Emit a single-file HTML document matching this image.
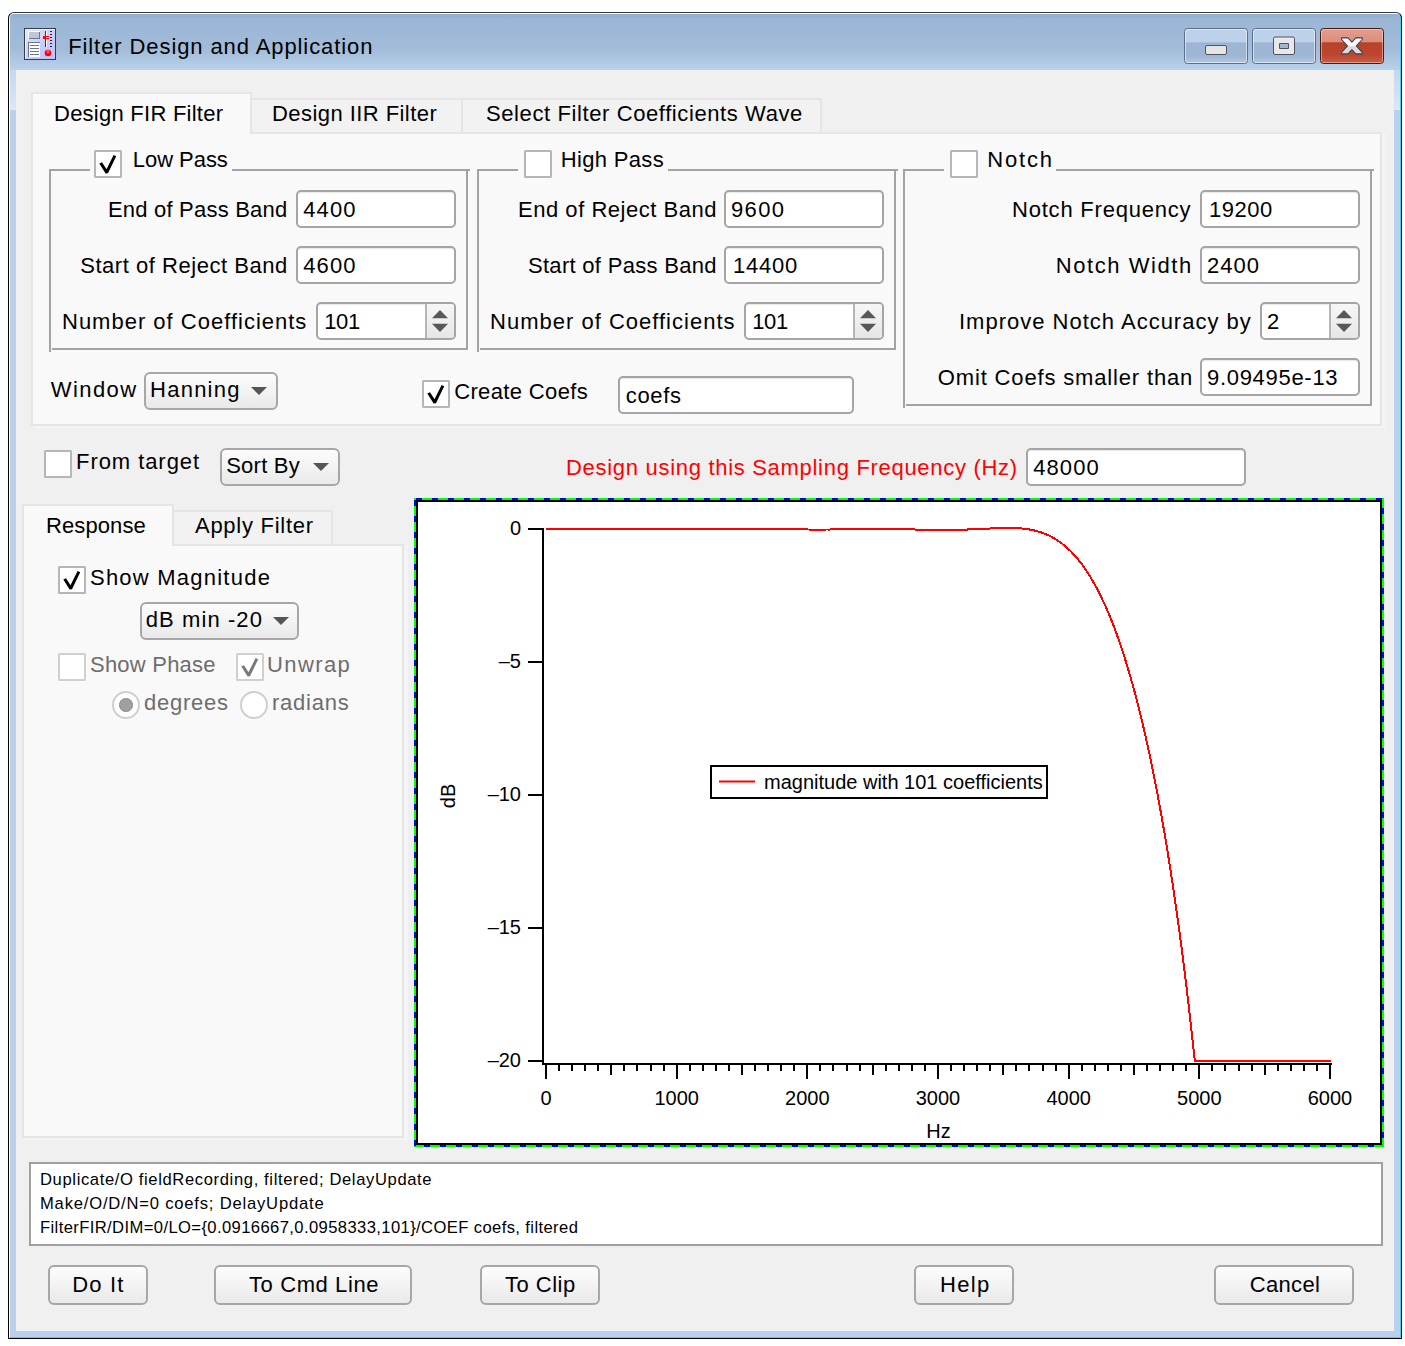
<!DOCTYPE html>
<html lang="en"><head><meta charset="utf-8"><title>Filter Design and Application</title>
<style>
html,body{margin:0;padding:0;background:#fff}
body{width:1405px;height:1346px;position:relative;overflow:hidden;font-family:"Liberation Sans",Arial,sans-serif;color:#000}
div,span,svg,i{box-sizing:border-box}
.abs,.t,.in,.btn,.cb,.rb,.ln,.spb,.pane,.tab,.frame,.client,.titlebar,.wb,.graph,.cmd{position:absolute}
.t{white-space:pre;display:block}
.frame{border:1px solid #000;border-top-color:#3a3a3a;border-radius:6px 6px 0 0;background:#b9d1ea;box-shadow:inset 1px 1px 0 #fff,inset -1px -1px 0 #3fd4f6}
.glow{position:absolute;background:linear-gradient(#c3d7ee,#dce8f5)}
.titlebar{background:linear-gradient(#92aed0 0,#9cb7d6 10%,#a1bbd9 62%,#b9d1ea 100%);border-radius:4px 4px 0 0}
.client{background:#f0f0f0}
.pane{background:#f9f9f9;border:2px solid #e5e5e5;box-shadow:4px 2px 0 #f4f4f4}
.tab{background:#f2f2f2;border:2px solid #e5e5e5;border-bottom:none}
.tab.on{background:#f9f9f9}
.ln{background:#a3a3a3}
.in{background:#fff;border:2px solid #a5a5a5;border-radius:5px;box-shadow:inset 0 2px 1px -1px #e9e9e9}
.spb{background:linear-gradient(#f7f7f7,#e6e6e6);border-left:2px solid #b5b5b5;border-radius:0 3px 3px 0}
.btn{background:linear-gradient(#fcfcfc 0,#f3f3f3 50%,#e9e9e9 100%);border:2px solid #a7a7a7;border-radius:6px}
.cb{background:#fff;border:2px solid #b6b6b6;border-radius:1.5px}
.cb.dis{border-color:#d0d0d0}
.cb svg{position:absolute;left:-2px;top:-2px}
.cb polygon{fill:#000}
.cb.dis polygon{fill:#7a7a7a}
.rb{background:#fff;border:2px solid #cfcfcf;border-radius:50%}
.rb i{position:absolute;left:5.2px;top:5.2px;width:13.600px;height:13.600px;border-radius:50%;background:#a0a0a0;border:1.500px solid #8c8c8c}
.dis{color:#6d6d6d}
.cmd{background:#fff;border:2px solid #a0a0a0}
.red{color:#f00}
</style></head><body>

<div class="window">
<div class="frame" style="left:8px;top:12px;width:1394px;height:1327px;"></div>
<div class="titlebar" style="left:10px;top:14px;width:1390px;height:56px;"></div>
<div class="glow" style="left:10px;top:70px;width:6px;height:40px;"></div>
<div class="glow" style="left:1394px;top:70px;width:6px;height:40px;"></div>
<svg class="abs" style="left:24px;top:28px" width="32" height="32" viewBox="0 0 32 32">
<defs><linearGradient id="icg" x1="0" y1="0" x2="1" y2="1"><stop offset="0" stop-color="#e6e6ff"/><stop offset=".55" stop-color="#cacbfa"/><stop offset="1" stop-color="#bdc0f7"/></linearGradient>
<radialGradient id="icb" cx=".5" cy=".3" r=".6"><stop offset="0" stop-color="#ffb0b0"/><stop offset=".45" stop-color="#ff1010"/><stop offset="1" stop-color="#f00000"/></radialGradient></defs>
<rect x=".5" y=".5" width="31" height="31" fill="url(#icg)" stroke="#333d4a"/>
<path d="M1.500 30.500V1.500H30.500" fill="none" stroke="#f4f4ff" stroke-opacity=".8"/>
<rect x="4" y="3" width="12" height="8" fill="#fff"/><rect x="5" y="4" width="11" height="7" fill="#66788f"/><rect x="5" y="4" width="10" height="6" fill="#c0c6d2"/>
<rect x="4" y="14" width="12" height="15" fill="#66788f"/><rect x="5" y="15" width="11" height="14" fill="#fff"/>
<path d="M6 17.500h9M6 20.500h9M6 23.500h9M6 26.500h9" stroke="#66788f"/>
<rect x="21" y="3" width="1" height="16" fill="#2f3946"/><rect x="22" y="3" width="1" height="16" fill="#fff"/>
<path d="M26 3.500h2M26 6.500h2M26 9.500h2M26 12.500h2M26 15.500h2M26 18.500h2" stroke="#262626"/>
<rect x="19" y="8" width="6" height="3" fill="#f00"/><rect x="22" y="9" width="3" height="1" fill="#fff"/>
<circle cx="24" cy="25" r="3.300" fill="url(#icb)"/>
</svg>
<span id="t1" class="t " style="left:68.20px;top:34px;font-size:22px;line-height:25px;letter-spacing:0.907px;">Filter Design and Application</span>
<style>
.wb{border:1px solid #5a6f8d;border-radius:3.5px;box-shadow:inset 0 0 0 1px rgba(255,255,255,.55);
background:linear-gradient(#bdd2ea 0,#bdd2ea 39%,#9eb6d4 40%,#9eb6d4 80%,#b1c8e2 100%)}
.wb.close{border-color:#4b1a14;background:linear-gradient(#e39d8e 0,#dc8d7c 39%,#b8412a 40%,#bb452e 75%,#cc5d48 100%);box-shadow:inset 0 0 0 1px rgba(255,220,210,.5)}
.wb svg{position:absolute;left:-1px;top:-1px}
</style>
<div class="wb min" style="left:1184px;top:28px;width:64px;height:36px"><svg width="64" height="36" viewBox="0 0 64 36"><rect x="21.500" y="17.500" width="21" height="9" rx="1.500" fill="#e4e4e4" stroke="#4f5560"/></svg></div>
<div class="wb max" style="left:1252px;top:28px;width:64px;height:36px"><svg width="64" height="36" viewBox="0 0 64 36"><path d="M21.500 10.500a1.500 1.500 0 0 1 1.500-1.500h18a1.500 1.500 0 0 1 1.500 1.500v14.500a1.500 1.500 0 0 1-1.500 1.500h-18a1.500 1.500 0 0 1-1.500-1.500zM27.500 15.500v5h9v-5z" fill="#e8e8e8" fill-rule="evenodd" stroke="#4f5560"/></svg></div>
<div class="wb close" style="left:1320px;top:28px;width:64px;height:36px"><svg width="64" height="36" viewBox="0 0 64 36"><defs><linearGradient id="xg" x1="0" y1="0" x2="0" y2="1"><stop offset=".52" stop-color="#fdfdfd"/><stop offset=".53" stop-color="#dcdcdc"/></linearGradient></defs><path d="M21.600 9.900h6.400l3.900 4.200 3.900-4.200h6.400v1.600l-5.900 6.400 5.900 6.400v1.600h-6.400l-3.900-4.200-3.900 4.200h-6.400v-1.600l5.900-6.400-5.900-6.400z" fill="url(#xg)" stroke="#3b4058" stroke-width="1.100" stroke-linejoin="round"/></svg></div>
<div class="client" style="left:16px;top:70px;width:1378px;height:1261px;"></div>
<div class="tabwidget">
<div class="pane" style="left:31px;top:132px;width:1351px;height:294px;"></div>
<div class="tab" style="left:250px;top:98px;width:213px;height:34px;"></div>
<div class="tab" style="left:461px;top:98px;width:361px;height:34px;"></div>
<div class="tab on" style="left:31px;top:92px;width:221px;height:42px;"></div>
<span id="t2" class="t " style="left:54.00px;top:101px;font-size:22px;line-height:25px;letter-spacing:0.250px;">Design FIR Filter</span>
<span id="t3" class="t " style="left:272.00px;top:101px;font-size:22px;line-height:25px;letter-spacing:0.438px;">Design IIR Filter</span>
<span id="t4" class="t " style="left:486.00px;top:101px;font-size:22px;line-height:25px;letter-spacing:0.600px;">Select Filter Coefficients Wave</span>
<div class="group"><div class="ln" style="left:49px;top:169px;width:2px;height:182.5px;"></div><div class="ln" style="left:466px;top:171px;width:2px;height:179px;"></div><div class="ln" style="left:52px;top:348px;width:416px;height:2px;"></div><div class="ln" style="left:49px;top:169px;width:41px;height:2px;"></div><div class="ln" style="left:232px;top:169px;width:237.5px;height:2px;"></div><div class="cb" style="left:94px;top:150px;width:28px;height:28px;"><svg class="ck" width="28" height="28" viewBox="0 0 28 28"><polygon points="5.3,13.4 8,12.2 12.5,19.3 19.6,5 22.2,6.2 14,23.2 11.6,23.5"/></svg></div><span id="t5" class="t " style="left:132.80px;top:147px;font-size:22px;line-height:25px;letter-spacing:-0.046px;">Low Pass</span><span id="t6" class="t " style="left:108.00px;top:197px;font-size:22px;line-height:25px;letter-spacing:0.200px;">End of Pass Band</span><div class="field"><div class="in" style="left:296px;top:190px;width:160px;height:38px;"></div><span id="t7" class="t " style="left:303.20px;top:197px;font-size:22px;line-height:25px;letter-spacing:1.122px;">4400</span></div><span id="t8" class="t " style="left:80.20px;top:253px;font-size:22px;line-height:25px;letter-spacing:0.536px;">Start of Reject Band</span><div class="field"><div class="in" style="left:296px;top:246px;width:160px;height:38px;"></div><span id="t9" class="t " style="left:303.20px;top:253px;font-size:22px;line-height:25px;letter-spacing:1.122px;">4600</span></div><span id="t10" class="t " style="left:62.00px;top:309px;font-size:22px;line-height:25px;letter-spacing:1.000px;">Number of Coefficients</span><div class="field"><div class="in" style="left:316px;top:302px;width:140px;height:38px;"></div><div class="spb" style="left:425px;top:304px;width:29px;height:34px;"></div><svg class="abs" style="left:425px;top:302px" width="31" height="38" viewBox="0 0 31 38"><polygon points="7,16.2 15,8 23,16.2" fill="#585858"/><polygon points="7,21.8 15,30 23,21.8" fill="#585858"/></svg><span id="t11" class="t " style="left:324.20px;top:309px;font-size:22px;line-height:25px;letter-spacing:-0.300px;">101</span></div></div>
<div class="group"><div class="ln" style="left:477px;top:169px;width:2px;height:182.5px;"></div><div class="ln" style="left:894px;top:171px;width:2px;height:179px;"></div><div class="ln" style="left:480px;top:348px;width:416px;height:2px;"></div><div class="ln" style="left:477px;top:169px;width:41px;height:2px;"></div><div class="ln" style="left:668px;top:169px;width:229.5px;height:2px;"></div><div class="cb" style="left:524px;top:150px;width:28px;height:28px;"></div><span id="t12" class="t " style="left:560.80px;top:147px;font-size:22px;line-height:25px;letter-spacing:0.325px;">High Pass</span><span id="t13" class="t " style="left:518.00px;top:197px;font-size:22px;line-height:25px;letter-spacing:0.529px;">End of Reject Band</span><div class="field"><div class="in" style="left:724px;top:190px;width:160px;height:38px;"></div><span id="t14" class="t " style="left:731.00px;top:197px;font-size:22px;line-height:25px;letter-spacing:1.334px;">9600</span></div><span id="t15" class="t " style="left:528.00px;top:253px;font-size:22px;line-height:25px;letter-spacing:0.294px;">Start of Pass Band</span><div class="field"><div class="in" style="left:724px;top:246px;width:160px;height:38px;"></div><span id="t16" class="t " style="left:733.00px;top:253px;font-size:22px;line-height:25px;letter-spacing:0.750px;">14400</span></div><span id="t17" class="t " style="left:490.00px;top:309px;font-size:22px;line-height:25px;letter-spacing:1.008px;">Number of Coefficients</span><div class="field"><div class="in" style="left:744px;top:302px;width:140px;height:38px;"></div><div class="spb" style="left:853px;top:304px;width:29px;height:34px;"></div><svg class="abs" style="left:853px;top:302px" width="31" height="38" viewBox="0 0 31 38"><polygon points="7,16.2 15,8 23,16.2" fill="#585858"/><polygon points="7,21.8 15,30 23,21.8" fill="#585858"/></svg><span id="t18" class="t " style="left:752.20px;top:309px;font-size:22px;line-height:25px;letter-spacing:-0.300px;">101</span></div></div>
<div class="group"><div class="ln" style="left:903px;top:169px;width:2px;height:238.5px;"></div><div class="ln" style="left:1370px;top:171px;width:2px;height:235px;"></div><div class="ln" style="left:906px;top:404px;width:466px;height:2px;"></div><div class="ln" style="left:903px;top:169px;width:41px;height:2px;"></div><div class="ln" style="left:1056px;top:169px;width:317.5px;height:2px;"></div><div class="cb" style="left:950px;top:150px;width:28px;height:28px;"></div><span id="t19" class="t " style="left:987.20px;top:147px;font-size:22px;line-height:25px;letter-spacing:1.850px;">Notch</span><span id="t20" class="t " style="left:1012.00px;top:197px;font-size:22px;line-height:25px;letter-spacing:0.786px;">Notch Frequency</span><div class="field"><div class="in" style="left:1200px;top:190px;width:160px;height:38px;"></div><span id="t21" class="t " style="left:1209.00px;top:197px;font-size:22px;line-height:25px;letter-spacing:0.500px;">19200</span></div><span id="t22" class="t " style="left:1055.80px;top:253px;font-size:22px;line-height:25px;letter-spacing:1.560px;">Notch Width</span><div class="field"><div class="in" style="left:1200px;top:246px;width:160px;height:38px;"></div><span id="t23" class="t " style="left:1207.00px;top:253px;font-size:22px;line-height:25px;letter-spacing:1.000px;">2400</span></div><span id="t24" class="t " style="left:959.00px;top:309px;font-size:22px;line-height:25px;letter-spacing:1.000px;">Improve Notch Accuracy by</span><div class="field"><div class="in" style="left:1260px;top:302px;width:100px;height:38px;"></div><div class="spb" style="left:1329px;top:304px;width:29px;height:34px;"></div><svg class="abs" style="left:1329px;top:302px" width="31" height="38" viewBox="0 0 31 38"><polygon points="7,16.2 15,8 23,16.2" fill="#585858"/><polygon points="7,21.8 15,30 23,21.8" fill="#585858"/></svg><span id="t25" class="t " style="left:1267.00px;top:309px;font-size:22px;line-height:25px;letter-spacing:56.000px;">2</span></div><span id="t26" class="t " style="left:937.80px;top:365px;font-size:22px;line-height:25px;letter-spacing:0.845px;">Omit Coefs smaller than</span><div class="field"><div class="in" style="left:1200px;top:358px;width:160px;height:38px;"></div><span id="t27" class="t " style="left:1207.00px;top:365px;font-size:22px;line-height:25px;letter-spacing:0.700px;">9.09495e-13</span></div></div>
<span id="t28" class="t " style="left:50.80px;top:377px;font-size:22px;line-height:25px;letter-spacing:1.400px;">Window</span>
<div class="popup"><div class="btn" style="left:144px;top:372px;width:134px;height:38px;"></div><span id="t29" class="t " style="left:150.00px;top:377px;font-size:22px;line-height:25px;letter-spacing:1.256px;">Hanning</span><svg class="abs" style="left:251px;top:387.0px" width="16" height="8" viewBox="0 0 16 8"><polygon points="0,0 16,0 8,8" fill="#555"/></svg></div>
<div class="cb" style="left:422px;top:380px;width:28px;height:28px;"><svg class="ck" width="28" height="28" viewBox="0 0 28 28"><polygon points="5.3,13.4 8,12.2 12.5,19.3 19.6,5 22.2,6.2 14,23.2 11.6,23.5"/></svg></div><span id="t30" class="t " style="left:454.20px;top:379px;font-size:22px;line-height:25px;letter-spacing:0.356px;">Create Coefs</span>
<div class="field"><div class="in" style="left:618px;top:376px;width:236px;height:38px;"></div><span id="t31" class="t " style="left:625.80px;top:383px;font-size:22px;line-height:25px;letter-spacing:0.650px;">coefs</span></div>
</div>
<div class="cb" style="left:44px;top:450px;width:28px;height:28px;"></div><span id="t32" class="t " style="left:76.00px;top:449px;font-size:22px;line-height:25px;letter-spacing:0.940px;">From target</span>
<div class="popup"><div class="btn" style="left:220px;top:448px;width:120px;height:38px;"></div><span id="t33" class="t " style="left:226.20px;top:453px;font-size:22px;line-height:25px;letter-spacing:0.244px;">Sort By</span><svg class="abs" style="left:313px;top:463.0px" width="16" height="8" viewBox="0 0 16 8"><polygon points="0,0 16,0 8,8" fill="#555"/></svg></div>
<span id="t34" class="t red" style="left:566.00px;top:455px;font-size:22px;line-height:25px;letter-spacing:0.700px;">Design using this Sampling Frequency (Hz)</span>
<div class="field"><div class="in" style="left:1026px;top:448px;width:220px;height:38px;"></div><span id="t35" class="t " style="left:1033.20px;top:455px;font-size:22px;line-height:25px;letter-spacing:1.100px;">48000</span></div>
<div class="tabwidget">
<div class="pane" style="left:22px;top:544px;width:382px;height:594px;"></div>
<div class="tab" style="left:172px;top:510px;width:161px;height:34px;"></div>
<div class="tab on" style="left:22px;top:504px;width:152px;height:42px;"></div>
<span id="t36" class="t " style="left:46.00px;top:513px;font-size:22px;line-height:25px;letter-spacing:0.097px;">Response</span>
<span id="t37" class="t " style="left:195.00px;top:513px;font-size:22px;line-height:25px;letter-spacing:0.727px;">Apply Filter</span>
<div class="cb" style="left:58px;top:566px;width:28px;height:28px;"><svg class="ck" width="28" height="28" viewBox="0 0 28 28"><polygon points="5.3,13.4 8,12.2 12.5,19.3 19.6,5 22.2,6.2 14,23.2 11.6,23.5"/></svg></div><span id="t38" class="t " style="left:90.00px;top:565px;font-size:22px;line-height:25px;letter-spacing:1.231px;">Show Magnitude</span>
<div class="popup"><div class="btn" style="left:140px;top:602px;width:159px;height:38px;"></div><span id="t39" class="t " style="left:145.80px;top:607px;font-size:22px;line-height:25px;letter-spacing:1.076px;">dB min -20</span><svg class="abs" style="left:273px;top:617.0px" width="16" height="8" viewBox="0 0 16 8"><polygon points="0,0 16,0 8,8" fill="#555"/></svg></div>
<div class="cb dis" style="left:58px;top:653px;width:28px;height:28px;"></div><span id="t40" class="t dis" style="left:90.00px;top:652px;font-size:22px;line-height:25px;letter-spacing:0.222px;">Show Phase</span>
<div class="cb dis" style="left:236px;top:653px;width:28px;height:28px;"><svg class="ck" width="28" height="28" viewBox="0 0 28 28"><polygon points="5.3,13.4 8,12.2 12.5,19.3 19.6,5 22.2,6.2 14,23.2 11.6,23.5"/></svg></div><span id="t41" class="t dis" style="left:267.00px;top:652px;font-size:22px;line-height:25px;letter-spacing:1.400px;">Unwrap</span>
<div class="rb" style="left:112px;top:691px;width:28px;height:28px;"><i></i></div><span id="t42" class="t dis" style="left:144.00px;top:690px;font-size:22px;line-height:25px;letter-spacing:0.744px;">degrees</span>
<div class="rb" style="left:240px;top:691px;width:28px;height:28px;"></div><span id="t43" class="t dis" style="left:272.00px;top:690px;font-size:22px;line-height:25px;letter-spacing:0.756px;">radians</span>
</div>
<svg class="graph" style="left:414px;top:498px" width="970" height="649" viewBox="414 498 970 649" font-family="Liberation Sans, Arial, sans-serif" font-size="20">
<rect x="414" y="498" width="970" height="649" fill="#0f0"/>
<g stroke="#00f" stroke-width="2" stroke-dasharray="6 10" shape-rendering="crispEdges">
<path d="M416 499H1384"/>
<path d="M415 500V1147"/>
<path d="M424 1146H1384"/>
<path d="M1383 508V1147"/>
</g>
<rect x="416" y="500" width="966" height="645" fill="#000"/>
<rect x="418" y="502" width="962" height="641" fill="#fff"/>
<g fill="#000" shape-rendering="crispEdges">
<rect x="542" y="528" width="2" height="536"/>
<rect x="542" y="1063" width="790" height="2"/>
<rect x="528" y="528" width="14" height="2"/>
<rect x="528" y="661" width="14" height="2"/>
<rect x="528" y="794" width="14" height="2"/>
<rect x="528" y="927" width="14" height="2"/>
<rect x="528" y="1060" width="14" height="2"/>
<rect x="545" y="1065" width="2" height="14"/>
<rect x="558" y="1065" width="2" height="6"/>
<rect x="571" y="1065" width="2" height="6"/>
<rect x="584" y="1065" width="2" height="6"/>
<rect x="597" y="1065" width="2" height="6"/>
<rect x="610" y="1065" width="2" height="10"/>
<rect x="623" y="1065" width="2" height="6"/>
<rect x="636" y="1065" width="2" height="6"/>
<rect x="650" y="1065" width="2" height="6"/>
<rect x="663" y="1065" width="2" height="6"/>
<rect x="676" y="1065" width="2" height="14"/>
<rect x="689" y="1065" width="2" height="6"/>
<rect x="702" y="1065" width="2" height="6"/>
<rect x="715" y="1065" width="2" height="6"/>
<rect x="728" y="1065" width="2" height="6"/>
<rect x="741" y="1065" width="2" height="10"/>
<rect x="754" y="1065" width="2" height="6"/>
<rect x="767" y="1065" width="2" height="6"/>
<rect x="780" y="1065" width="2" height="6"/>
<rect x="793" y="1065" width="2" height="6"/>
<rect x="806" y="1065" width="2" height="14"/>
<rect x="819" y="1065" width="2" height="6"/>
<rect x="832" y="1065" width="2" height="6"/>
<rect x="846" y="1065" width="2" height="6"/>
<rect x="859" y="1065" width="2" height="6"/>
<rect x="872" y="1065" width="2" height="10"/>
<rect x="885" y="1065" width="2" height="6"/>
<rect x="898" y="1065" width="2" height="6"/>
<rect x="911" y="1065" width="2" height="6"/>
<rect x="924" y="1065" width="2" height="6"/>
<rect x="937" y="1065" width="2" height="14"/>
<rect x="950" y="1065" width="2" height="6"/>
<rect x="963" y="1065" width="2" height="6"/>
<rect x="976" y="1065" width="2" height="6"/>
<rect x="989" y="1065" width="2" height="6"/>
<rect x="1002" y="1065" width="2" height="10"/>
<rect x="1015" y="1065" width="2" height="6"/>
<rect x="1028" y="1065" width="2" height="6"/>
<rect x="1042" y="1065" width="2" height="6"/>
<rect x="1055" y="1065" width="2" height="6"/>
<rect x="1068" y="1065" width="2" height="14"/>
<rect x="1081" y="1065" width="2" height="6"/>
<rect x="1094" y="1065" width="2" height="6"/>
<rect x="1107" y="1065" width="2" height="6"/>
<rect x="1120" y="1065" width="2" height="6"/>
<rect x="1133" y="1065" width="2" height="10"/>
<rect x="1146" y="1065" width="2" height="6"/>
<rect x="1159" y="1065" width="2" height="6"/>
<rect x="1172" y="1065" width="2" height="6"/>
<rect x="1185" y="1065" width="2" height="6"/>
<rect x="1198" y="1065" width="2" height="14"/>
<rect x="1211" y="1065" width="2" height="6"/>
<rect x="1224" y="1065" width="2" height="6"/>
<rect x="1238" y="1065" width="2" height="6"/>
<rect x="1251" y="1065" width="2" height="6"/>
<rect x="1264" y="1065" width="2" height="10"/>
<rect x="1277" y="1065" width="2" height="6"/>
<rect x="1290" y="1065" width="2" height="6"/>
<rect x="1303" y="1065" width="2" height="6"/>
<rect x="1316" y="1065" width="2" height="6"/>
<rect x="1329" y="1065" width="2" height="14"/>
</g>
<text x="521" y="534.5" text-anchor="end">0</text>
<text x="521" y="667.5" text-anchor="end">–5</text>
<text x="521" y="800.5" text-anchor="end">–10</text>
<text x="521" y="933.5" text-anchor="end">–15</text>
<text x="521" y="1066.5" text-anchor="end">–20</text>
<text x="546.0" y="1105" text-anchor="middle">0</text>
<text x="676.7" y="1105" text-anchor="middle">1000</text>
<text x="807.3" y="1105" text-anchor="middle">2000</text>
<text x="938.0" y="1105" text-anchor="middle">3000</text>
<text x="1068.7" y="1105" text-anchor="middle">4000</text>
<text x="1199.3" y="1105" text-anchor="middle">5000</text>
<text x="1330.0" y="1105" text-anchor="middle">6000</text>
<text x="938.5" y="1137.500" text-anchor="middle">Hz</text>
<text transform="translate(455 796) rotate(-90)" text-anchor="middle">dB</text>
<polyline points="546.0,529.43 547.0,529.43 548.0,529.43 549.0,529.43 550.0,529.43 551.0,529.43 552.0,529.43 553.0,529.43 554.0,529.43 555.0,529.43 556.0,529.43 557.0,529.43 558.0,529.43 559.0,529.43 560.0,529.43 561.0,529.43 562.0,529.43 563.0,529.43 564.0,529.43 565.0,529.43 566.0,529.43 567.0,529.43 568.0,529.43 569.0,529.43 570.0,529.43 571.0,529.43 572.0,529.43 573.0,529.43 574.0,529.43 575.0,529.43 576.0,529.42 577.0,529.42 578.0,529.42 579.0,529.42 580.0,529.42 581.0,529.42 582.0,529.42 583.0,529.42 584.0,529.42 585.0,529.42 586.0,529.42 587.0,529.42 588.0,529.42 589.0,529.42 590.0,529.42 591.0,529.42 592.0,529.41 593.0,529.41 594.0,529.41 595.0,529.41 596.0,529.41 597.0,529.41 598.0,529.41 599.0,529.41 600.0,529.41 601.0,529.41 602.0,529.41 603.0,529.41 604.0,529.41 605.0,529.41 606.0,529.41 607.0,529.41 608.0,529.41 609.0,529.41 610.0,529.40 611.0,529.40 612.0,529.40 613.0,529.40 614.0,529.40 615.0,529.40 616.0,529.40 617.0,529.40 618.0,529.40 619.0,529.40 620.0,529.40 621.0,529.40 622.0,529.40 623.0,529.40 624.0,529.40 625.0,529.40 626.0,529.40 627.0,529.40 628.0,529.40 629.0,529.40 630.0,529.40 631.0,529.40 632.0,529.40 633.0,529.40 634.0,529.40 635.0,529.40 636.0,529.40 637.0,529.41 638.0,529.41 639.0,529.41 640.0,529.41 641.0,529.41 642.0,529.41 643.0,529.41 644.0,529.41 645.0,529.41 646.0,529.41 647.0,529.41 648.0,529.41 649.0,529.41 650.0,529.42 651.0,529.42 652.0,529.42 653.0,529.42 654.0,529.42 655.0,529.42 656.0,529.42 657.0,529.42 658.0,529.42 659.0,529.42 660.0,529.43 661.0,529.43 662.0,529.43 663.0,529.43 664.0,529.43 665.0,529.43 666.0,529.43 667.0,529.43 668.0,529.43 669.0,529.44 670.0,529.44 671.0,529.44 672.0,529.44 673.0,529.44 674.0,529.44 675.0,529.44 676.0,529.44 677.0,529.44 678.0,529.44 679.0,529.44 680.0,529.45 681.0,529.45 682.0,529.45 683.0,529.45 684.0,529.45 685.0,529.45 686.0,529.45 687.0,529.45 688.0,529.45 689.0,529.45 690.0,529.45 691.0,529.45 692.0,529.45 693.0,529.45 694.0,529.45 695.0,529.45 696.0,529.45 697.0,529.45 698.0,529.45 699.0,529.45 700.0,529.45 701.0,529.45 702.0,529.45 703.0,529.44 704.0,529.44 705.0,529.44 706.0,529.44 707.0,529.44 708.0,529.44 709.0,529.44 710.0,529.44 711.0,529.44 712.0,529.43 713.0,529.43 714.0,529.43 715.0,529.43 716.0,529.43 717.0,529.43 718.0,529.42 719.0,529.42 720.0,529.42 721.0,529.42 722.0,529.42 723.0,529.42 724.0,529.41 725.0,529.41 726.0,529.41 727.0,529.41 728.0,529.41 729.0,529.40 730.0,529.40 731.0,529.40 732.0,529.40 733.0,529.40 734.0,529.39 735.0,529.39 736.0,529.39 737.0,529.39 738.0,529.39 739.0,529.39 740.0,529.38 741.0,529.38 742.0,529.38 743.0,529.38 744.0,529.38 745.0,529.38 746.0,529.38 747.0,529.37 748.0,529.37 749.0,529.37 750.0,529.37 751.0,529.37 752.0,529.37 753.0,529.37 754.0,529.37 755.0,529.37 756.0,529.37 757.0,529.37 758.0,529.37 759.0,529.37 760.0,529.37 761.0,529.37 762.0,529.37 763.0,529.37 764.0,529.37 765.0,529.37 766.0,529.38 767.0,529.38 768.0,529.38 769.0,529.38 770.0,529.38 771.0,529.38 772.0,529.39 773.0,529.39 774.0,529.39 775.0,529.39 776.0,529.40 777.0,529.40 778.0,529.40 779.0,529.40 780.0,529.41 781.0,529.41 782.0,529.41 783.0,529.42 784.0,529.42 785.0,529.42 786.0,529.43 787.0,529.43 788.0,529.43 789.0,529.44 790.0,529.44 791.0,529.44 792.0,529.45 793.0,529.45 794.0,529.45 795.0,529.46 796.0,529.46 797.0,529.46 798.0,529.47 799.0,529.47 800.0,529.47 801.0,529.48 802.0,529.48 803.0,529.48 804.0,529.49 805.0,529.49 806.0,529.49 807.0,529.49 808.0,529.50 809.0,529.50 810.0,529.50 811.0,529.50 812.0,529.50 813.0,529.51 814.0,529.51 815.0,529.51 816.0,529.51 817.0,529.51 818.0,529.51 819.0,529.51 820.0,529.51 821.0,529.51 822.0,529.51 823.0,529.51 824.0,529.51 825.0,529.51 826.0,529.51 827.0,529.50 828.0,529.50 829.0,529.50 830.0,529.50 831.0,529.49 832.0,529.49 833.0,529.49 834.0,529.48 835.0,529.48 836.0,529.48 837.0,529.47 838.0,529.47 839.0,529.46 840.0,529.46 841.0,529.45 842.0,529.45 843.0,529.44 844.0,529.44 845.0,529.43 846.0,529.43 847.0,529.42 848.0,529.41 849.0,529.41 850.0,529.40 851.0,529.39 852.0,529.39 853.0,529.38 854.0,529.37 855.0,529.37 856.0,529.36 857.0,529.35 858.0,529.35 859.0,529.34 860.0,529.33 861.0,529.33 862.0,529.32 863.0,529.32 864.0,529.31 865.0,529.30 866.0,529.30 867.0,529.29 868.0,529.29 869.0,529.28 870.0,529.28 871.0,529.27 872.0,529.27 873.0,529.26 874.0,529.26 875.0,529.25 876.0,529.25 877.0,529.25 878.0,529.25 879.0,529.24 880.0,529.24 881.0,529.24 882.0,529.24 883.0,529.24 884.0,529.24 885.0,529.24 886.0,529.24 887.0,529.25 888.0,529.25 889.0,529.25 890.0,529.25 891.0,529.26 892.0,529.26 893.0,529.27 894.0,529.27 895.0,529.28 896.0,529.29 897.0,529.29 898.0,529.30 899.0,529.31 900.0,529.32 901.0,529.33 902.0,529.34 903.0,529.35 904.0,529.36 905.0,529.37 906.0,529.38 907.0,529.39 908.0,529.41 909.0,529.42 910.0,529.43 911.0,529.45 912.0,529.46 913.0,529.47 914.0,529.49 915.0,529.50 916.0,529.52 917.0,529.53 918.0,529.55 919.0,529.56 920.0,529.58 921.0,529.60 922.0,529.61 923.0,529.63 924.0,529.64 925.0,529.66 926.0,529.67 927.0,529.69 928.0,529.70 929.0,529.71 930.0,529.73 931.0,529.74 932.0,529.75 933.0,529.76 934.0,529.78 935.0,529.79 936.0,529.80 937.0,529.81 938.0,529.81 939.0,529.82 940.0,529.83 941.0,529.83 942.0,529.84 943.0,529.84 944.0,529.85 945.0,529.85 946.0,529.85 947.0,529.85 948.0,529.84 949.0,529.84 950.0,529.84 951.0,529.83 952.0,529.82 953.0,529.81 954.0,529.80 955.0,529.79 956.0,529.78 957.0,529.76 958.0,529.74 959.0,529.73 960.0,529.71 961.0,529.69 962.0,529.66 963.0,529.64 964.0,529.61 965.0,529.58 966.0,529.55 967.0,529.52 968.0,529.49 969.0,529.46 970.0,529.42 971.0,529.39 972.0,529.35 973.0,529.31 974.0,529.27 975.0,529.23 976.0,529.18 977.0,529.14 978.0,529.10 979.0,529.05 980.0,529.00 981.0,528.96 982.0,528.91 983.0,528.86 984.0,528.81 985.0,528.76 986.0,528.71 987.0,528.66 988.0,528.62 989.0,528.57 990.0,528.52 991.0,528.47 992.0,528.43 993.0,528.38 994.0,528.34 995.0,528.29 996.0,528.25 997.0,528.21 998.0,528.18 999.0,528.14 1000.0,528.11 1001.0,528.08 1002.0,528.05 1003.0,528.02 1004.0,528.00 1005.0,527.99 1006.0,527.97 1007.0,527.96 1008.0,527.96 1009.0,527.96 1010.0,527.96 1011.0,527.97 1012.0,527.99 1013.0,528.01 1014.0,528.04 1015.0,528.07 1016.0,528.12 1017.0,528.16 1018.0,528.22 1019.0,528.28 1020.0,528.35 1021.0,528.43 1022.0,528.52 1023.0,528.62 1024.0,528.73 1025.0,528.85 1026.0,528.97 1027.0,529.11 1028.0,529.26 1029.0,529.42 1030.0,529.59 1031.0,529.78 1032.0,529.98 1033.0,530.18 1034.0,530.41 1035.0,530.64 1036.0,530.89 1037.0,531.16 1038.0,531.44 1039.0,531.73 1040.0,532.04 1041.0,532.37 1042.0,532.71 1043.0,533.07 1044.0,533.44 1045.0,533.84 1046.0,534.25 1047.0,534.68 1048.0,535.13 1049.0,535.60 1050.0,536.08 1051.0,536.59 1052.0,537.12 1053.0,537.67 1054.0,538.24 1055.0,538.83 1056.0,539.44 1057.0,540.08 1058.0,540.74 1059.0,541.42 1060.0,542.12 1061.0,542.85 1062.0,543.61 1063.0,544.39 1064.0,545.19 1065.0,546.02 1066.0,546.88 1067.0,547.76 1068.0,548.67 1069.0,549.61 1070.0,550.57 1071.0,551.57 1072.0,552.59 1073.0,553.64 1074.0,554.72 1075.0,555.83 1076.0,556.97 1077.0,558.14 1078.0,559.34 1079.0,560.58 1080.0,561.84 1081.0,563.14 1082.0,564.47 1083.0,565.84 1084.0,567.23 1085.0,568.67 1086.0,570.13 1087.0,571.63 1088.0,573.17 1089.0,574.74 1090.0,576.35 1091.0,577.99 1092.0,579.68 1093.0,581.40 1094.0,583.15 1095.0,584.95 1096.0,586.78 1097.0,588.65 1098.0,590.57 1099.0,592.52 1100.0,594.51 1101.0,596.55 1102.0,598.62 1103.0,600.74 1104.0,602.90 1105.0,605.10 1106.0,607.34 1107.0,609.63 1108.0,611.96 1109.0,614.34 1110.0,616.76 1111.0,619.23 1112.0,621.74 1113.0,624.30 1114.0,626.91 1115.0,629.56 1116.0,632.27 1117.0,635.02 1118.0,637.82 1119.0,640.66 1120.0,643.56 1121.0,646.51 1122.0,649.51 1123.0,652.56 1124.0,655.67 1125.0,658.82 1126.0,662.03 1127.0,665.30 1128.0,668.61 1129.0,671.99 1130.0,675.41 1131.0,678.90 1132.0,682.44 1133.0,686.04 1134.0,689.70 1135.0,693.41 1136.0,697.19 1137.0,701.02 1138.0,704.92 1139.0,708.87 1140.0,712.89 1141.0,716.98 1142.0,721.12 1143.0,725.33 1144.0,729.61 1145.0,733.95 1146.0,738.36 1147.0,742.84 1148.0,747.39 1149.0,752.00 1150.0,756.69 1151.0,761.45 1152.0,766.28 1153.0,771.18 1154.0,776.16 1155.0,781.21 1156.0,786.34 1157.0,791.55 1158.0,796.83 1159.0,802.20 1160.0,807.65 1161.0,813.18 1162.0,818.79 1163.0,824.49 1164.0,830.28 1165.0,836.15 1166.0,842.11 1167.0,848.16 1168.0,854.31 1169.0,860.55 1170.0,866.88 1171.0,873.32 1172.0,879.85 1173.0,886.48 1174.0,893.22 1175.0,900.06 1176.0,907.01 1177.0,914.07 1178.0,921.24 1179.0,928.53 1180.0,935.93 1181.0,943.45 1182.0,951.10 1183.0,958.87 1184.0,966.77 1185.0,974.80 1186.0,982.96 1187.0,991.26 1188.0,999.71 1189.0,1008.30 1190.0,1017.04 1191.0,1025.94 1192.0,1034.99 1193.0,1044.21 1194.0,1053.60 1195.0,1061.42 1196.0,1061.42 1197.0,1061.42 1198.0,1061.42 1199.0,1061.42 1200.0,1061.42 1201.0,1061.42 1202.0,1061.42 1203.0,1061.42 1204.0,1061.42 1205.0,1061.42 1206.0,1061.42 1207.0,1061.42 1208.0,1061.42 1209.0,1061.42 1210.0,1061.42 1211.0,1061.42 1212.0,1061.42 1213.0,1061.42 1214.0,1061.42 1215.0,1061.42 1216.0,1061.42 1217.0,1061.42 1218.0,1061.42 1219.0,1061.42 1220.0,1061.42 1221.0,1061.42 1222.0,1061.42 1223.0,1061.42 1224.0,1061.42 1225.0,1061.42 1226.0,1061.42 1227.0,1061.42 1228.0,1061.42 1229.0,1061.42 1230.0,1061.42 1231.0,1061.42 1232.0,1061.42 1233.0,1061.42 1234.0,1061.42 1235.0,1061.42 1236.0,1061.42 1237.0,1061.42 1238.0,1061.42 1239.0,1061.42 1240.0,1061.42 1241.0,1061.42 1242.0,1061.42 1243.0,1061.42 1244.0,1061.42 1245.0,1061.42 1246.0,1061.42 1247.0,1061.42 1248.0,1061.42 1249.0,1061.42 1250.0,1061.42 1251.0,1061.42 1252.0,1061.42 1253.0,1061.42 1254.0,1061.42 1255.0,1061.42 1256.0,1061.42 1257.0,1061.42 1258.0,1061.42 1259.0,1061.42 1260.0,1061.42 1261.0,1061.42 1262.0,1061.42 1263.0,1061.42 1264.0,1061.42 1265.0,1061.42 1266.0,1061.42 1267.0,1061.42 1268.0,1061.42 1269.0,1061.42 1270.0,1061.42 1271.0,1061.42 1272.0,1061.42 1273.0,1061.42 1274.0,1061.42 1275.0,1061.42 1276.0,1061.42 1277.0,1061.42 1278.0,1061.42 1279.0,1061.42 1280.0,1061.42 1281.0,1061.42 1282.0,1061.42 1283.0,1061.42 1284.0,1061.42 1285.0,1061.42 1286.0,1061.42 1287.0,1061.42 1288.0,1061.42 1289.0,1061.42 1290.0,1061.42 1291.0,1061.42 1292.0,1061.42 1293.0,1061.42 1294.0,1061.42 1295.0,1061.42 1296.0,1061.42 1297.0,1061.42 1298.0,1061.42 1299.0,1061.42 1300.0,1061.42 1301.0,1061.42 1302.0,1061.42 1303.0,1061.42 1304.0,1061.42 1305.0,1061.42 1306.0,1061.42 1307.0,1061.42 1308.0,1061.42 1309.0,1061.42 1310.0,1061.42 1311.0,1061.42 1312.0,1061.42 1313.0,1061.42 1314.0,1061.42 1315.0,1061.42 1316.0,1061.42 1317.0,1061.42 1318.0,1061.42 1319.0,1061.42 1320.0,1061.42 1321.0,1061.42 1322.0,1061.42 1323.0,1061.42 1324.0,1061.42 1325.0,1061.42 1326.0,1061.42 1327.0,1061.42 1328.0,1061.42 1329.0,1061.42 1330.0,1061.42 1331.0,1061.42" fill="none" stroke="#f00" stroke-width="2" stroke-linejoin="round" shape-rendering="crispEdges"/>
<rect x="711" y="766" width="336" height="32" fill="#fff" stroke="#000" stroke-width="2"/>
<path d="M719 781.500H755" stroke="#f00" stroke-width="2"/>
<text x="764" y="789">magnitude with 101 coefficients</text>
</svg>
<div class="cmd" style="left:29px;top:1162px;width:1354px;height:84px;"></div>
<span id="t44" class="t " style="left:40.00px;top:1170px;font-size:16.6px;line-height:19px;letter-spacing:0.625px;">Duplicate/O fieldRecording, filtered; DelayUpdate</span>
<span id="t45" class="t " style="left:40.00px;top:1194px;font-size:16.6px;line-height:19px;letter-spacing:0.800px;">Make/O/D/N=0 coefs; DelayUpdate</span>
<span id="t46" class="t " style="left:40.00px;top:1218px;font-size:16.6px;line-height:19px;letter-spacing:0.391px;">FilterFIR/DIM=0/LO={0.0916667,0.0958333,101}/COEF coefs, filtered</span>
<div class="button"><div class="btn" style="left:48px;top:1265px;width:100px;height:40px;"></div><span id="t47" class="t " style="left:72.20px;top:1272px;font-size:22px;line-height:25px;letter-spacing:1.200px;">Do It</span></div>
<div class="button"><div class="btn" style="left:214px;top:1265px;width:198px;height:40px;"></div><span id="t48" class="t " style="left:249.00px;top:1272px;font-size:22px;line-height:25px;letter-spacing:0.600px;">To Cmd Line</span></div>
<div class="button"><div class="btn" style="left:480px;top:1265px;width:120px;height:40px;"></div><span id="t49" class="t " style="left:505.00px;top:1272px;font-size:22px;line-height:25px;letter-spacing:0.500px;">To Clip</span></div>
<div class="button"><div class="btn" style="left:914px;top:1265px;width:100px;height:40px;"></div><span id="t50" class="t " style="left:940.00px;top:1272px;font-size:22px;line-height:25px;letter-spacing:1.333px;">Help</span></div>
<div class="button"><div class="btn" style="left:1214px;top:1265px;width:140px;height:40px;"></div><span id="t51" class="t " style="left:1249.80px;top:1272px;font-size:22px;line-height:25px;letter-spacing:0.320px;">Cancel</span></div>
</div></body></html>
